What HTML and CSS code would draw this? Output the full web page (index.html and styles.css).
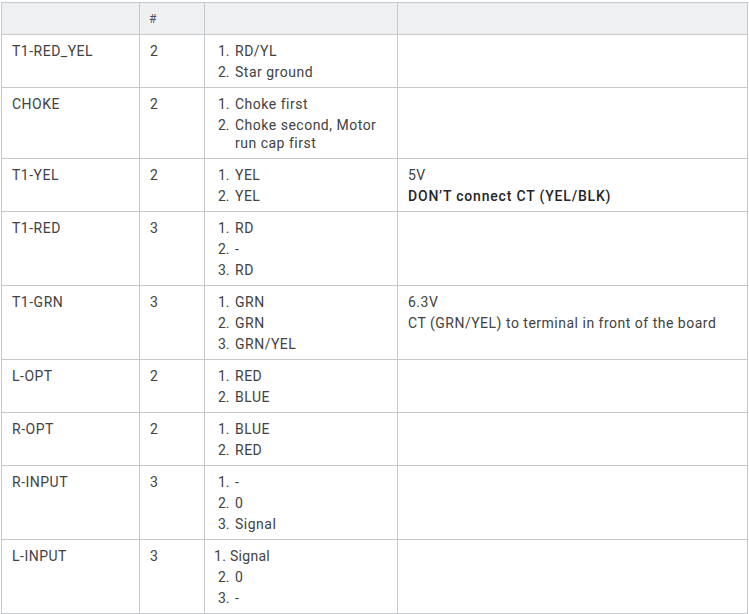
FILE: index.html
```html
<!DOCTYPE html>
<html>
<head>
<meta charset="utf-8">
<link rel="stylesheet" href="styles.css">
</head>
<body>
<table class="wiring">
  <colgroup>
    <col class="c-name">
    <col class="c-count">
    <col class="c-pins">
    <col class="c-notes">
  </colgroup>
  <thead>
    <tr><th></th><th>#</th><th></th><th></th></tr>
  </thead>
  <tbody>
    <tr>
      <td>T1-RED_YEL</td><td>2</td>
      <td><ol class="pins"><li><span class="n">1.</span><span>RD/YL</span></li><li><span class="n">2.</span><span>Star ground</span></li></ol></td>
      <td></td>
    </tr>
    <tr>
      <td>CHOKE</td><td>2</td>
      <td><ol class="pins"><li><span class="n">1.</span><span>Choke first</span></li><li><span class="n">2.</span><span>Choke second, Motor run cap first</span></li></ol></td>
      <td></td>
    </tr>
    <tr>
      <td>T1-YEL</td><td>2</td>
      <td><ol class="pins"><li><span class="n">1.</span><span>YEL</span></li><li><span class="n">2.</span><span>YEL</span></li></ol></td>
      <td><p class="note">5V</p><p class="note strong">DON’T connect CT (YEL/BLK)</p></td>
    </tr>
    <tr>
      <td>T1-RED</td><td>3</td>
      <td><ol class="pins"><li><span class="n">1.</span><span>RD</span></li><li><span class="n">2.</span><span>-</span></li><li><span class="n">3.</span><span>RD</span></li></ol></td>
      <td></td>
    </tr>
    <tr>
      <td>T1-GRN</td><td>3</td>
      <td><ol class="pins"><li><span class="n">1.</span><span>GRN</span></li><li><span class="n">2.</span><span>GRN</span></li><li><span class="n">3.</span><span>GRN/YEL</span></li></ol></td>
      <td><p class="note">6.3V</p><p class="note">CT (GRN/YEL) to terminal in front of the board</p></td>
    </tr>
    <tr>
      <td>L-OPT</td><td>2</td>
      <td><ol class="pins"><li><span class="n">1.</span><span>RED</span></li><li><span class="n">2.</span><span>BLUE</span></li></ol></td>
      <td></td>
    </tr>
    <tr>
      <td>R-OPT</td><td>2</td>
      <td><ol class="pins"><li><span class="n">1.</span><span>BLUE</span></li><li><span class="n">2.</span><span>RED</span></li></ol></td>
      <td></td>
    </tr>
    <tr>
      <td>R-INPUT</td><td>3</td>
      <td><ol class="pins"><li><span class="n">1.</span><span>-</span></li><li><span class="n">2.</span><span>0</span></li><li><span class="n">3.</span><span>Signal</span></li></ol></td>
      <td></td>
    </tr>
    <tr>
      <td>L-INPUT</td><td>3</td>
      <td><ol class="pins"><li class="plain">1. Signal</li><li><span class="n">2.</span><span>0</span></li><li><span class="n">3.</span><span>-</span></li></ol></td>
      <td></td>
    </tr>
  </tbody>
</table>
</body>
</html>
```

FILE: styles.css
```css
html, body {
  margin: 0;
  padding: 0;
  background: #ffffff;
}

body {
  padding: 2px 0 0 1px;
  font-family: Roboto, "Liberation Sans", sans-serif;
  font-size: 14px;
  letter-spacing: 0.5px;
  color: #424242;
}

.wiring {
  border-collapse: collapse;
  table-layout: fixed;
  width: 746px;
}

.c-name { width: 138px; }
.c-count { width: 65px; }
.c-pins { width: 193px; }
.c-notes { width: 350px; }

.wiring th,
.wiring td {
  border: 1px solid #c6c9cc;
  text-align: left;
  vertical-align: top;
  line-height: 18px;
}

.wiring th {
  background: #eff0f1;
  height: 31px;
  padding: 0 9px;
  font-weight: 400;
  font-size: 12px;
  color: #555;
  vertical-align: middle;
}

.wiring td {
  padding: 7px 9px 6px 10px;
}

.pins {
  list-style: none;
  margin: 0;
  padding: 0 0 0 3px;
}

.pins li {
  display: flex;
  margin-bottom: 3px;
}

.pins li:last-child {
  margin-bottom: 0;
}

.pins .n {
  flex: 0 0 17px;
  letter-spacing: 0;
}

.pins li.plain {
  display: block;
  margin-left: -4px;
  letter-spacing: 0.3px;
}

.note {
  margin: 0 0 3px;
}

.note:last-child {
  margin-bottom: 0;
}

.note.strong {
  font-weight: 500;
  color: #262626;
  letter-spacing: 0.8px;
}
```
